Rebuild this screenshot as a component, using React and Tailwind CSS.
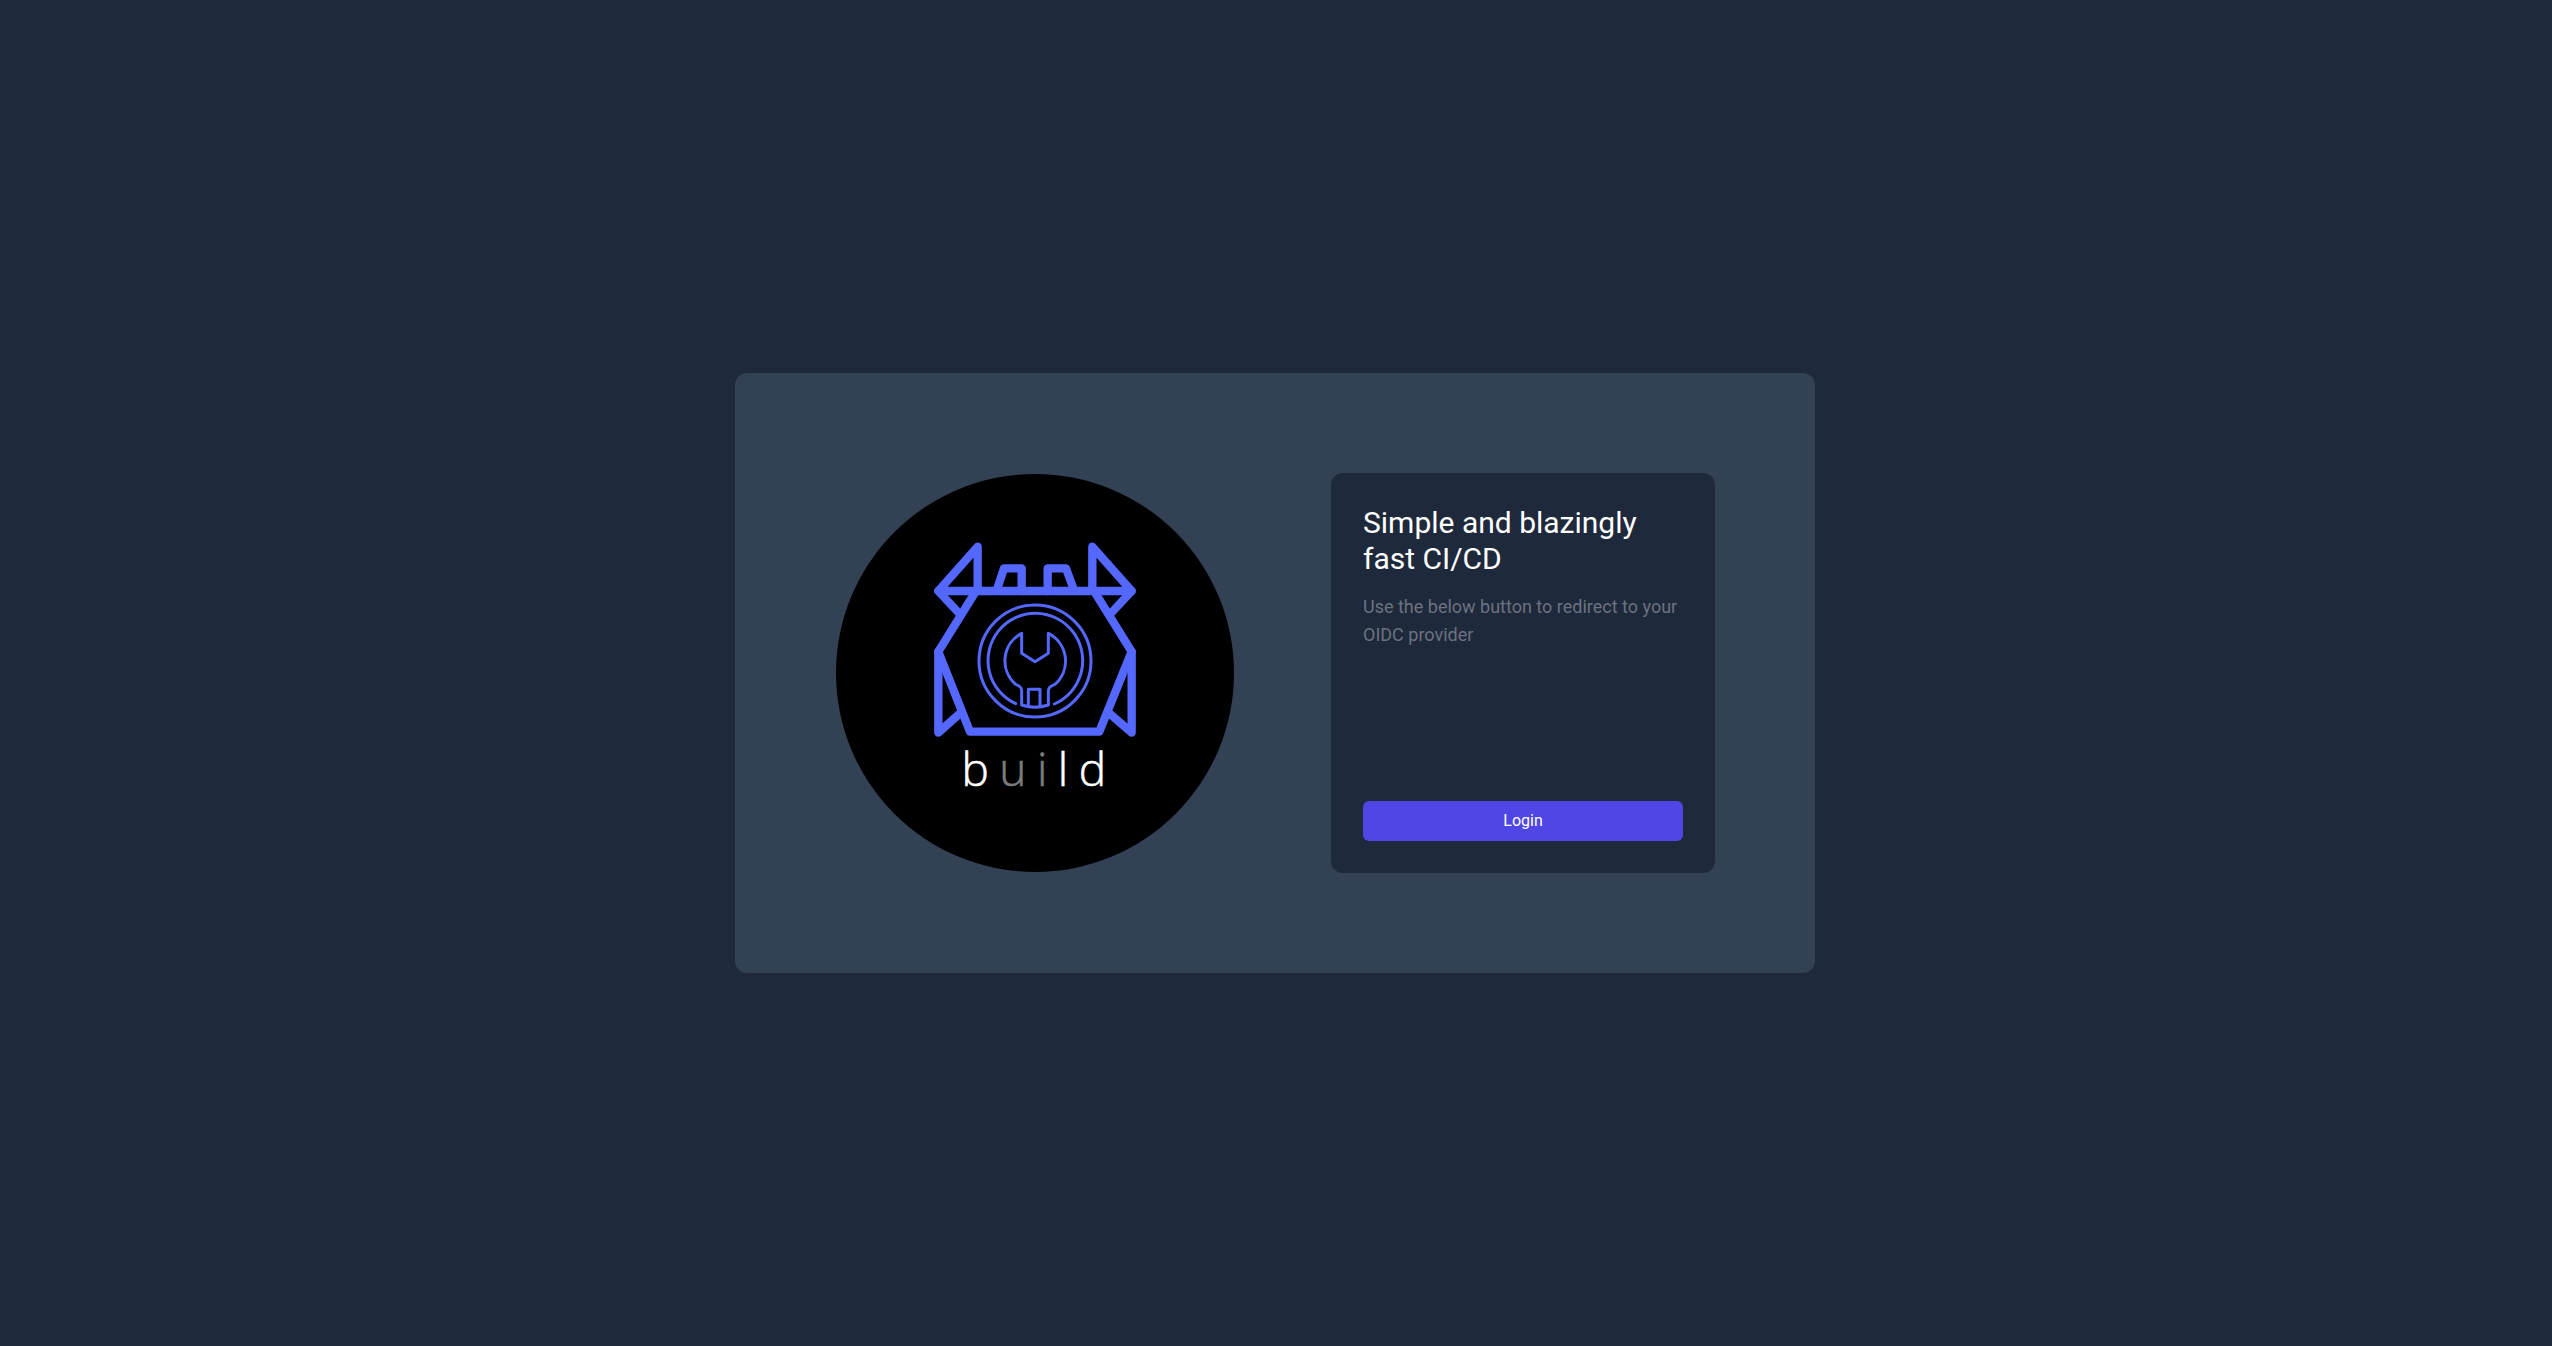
export default function App() {
  return (
    <div className="flex h-screen w-full items-center justify-center bg-[#1e293b] pr-[2px]" style={{ fontFamily: 'Roboto, sans-serif' }}>
      <div className="flex h-[600px] w-[1080px] items-center justify-between rounded-xl bg-[#334155] px-[100px]">
        <div className="relative ml-px h-[398px] w-[398px] rounded-full bg-black">
          <svg viewBox="48 42 1194 1194" className="h-full w-full" fill="none" stroke="#5468ff" strokeLinejoin="round" strokeLinecap="round">
            <g strokeWidth="25">
              <path d="M473 260 L355 393 H935 L817 260 V393 M473 260 V393" />
              <path d="M468 393 L355 575 L450 815 H838 L935 575 L822 393" />
              <path d="M355 393 L422 465 M935 393 L868 465" />
              <path d="M355 575 V818 L420 760 M935 575 V818 L868 760" />
              <path d="M532 385 L552 325 H605 V393 M683 393 V325 H738 L760 385" />
            </g>
            <g strokeWidth="9">
              <circle cx="645" cy="603" r="168" />
              <path d="M587 731 A142 142 0 1 1 703 732" />
              <path d="M605 520 V580 L645 605 L685 580 V520 A93 93 0 0 1 705 673 Q685 680 685 692 V735 Q645 748 605 735 V692 Q605 680 587 673 A93 93 0 0 1 605 520 Z" />
              <path d="M625 737 V688 H660 V737" />
            </g>
          </svg>
          <div className="absolute left-0 right-0 top-[259px] flex justify-center pl-[8px] text-[46px] font-light leading-[70px] tracking-[10.5px] text-white [-webkit-text-stroke:0.6px]" style={{ fontFamily: '"Open Sans", sans-serif' }}>
            <span>b</span>
            <span className="text-[#7d7d7d]">u</span>
            <span className="text-[#7d7d7d]">i</span>
            <span>l</span>
            <span>d</span>
          </div>
        </div>
        <div className="flex h-[400px] w-[384px] flex-col justify-between rounded-xl bg-[#1e293b] p-8">
          <div>
            <h2 className="text-3xl leading-9 font-normal text-white">Simple and blazingly fast CI/CD</h2>
            <p className="mt-4 text-lg leading-7 text-[#6b7280]">Use the below button to redirect to your OIDC provider</p>
          </div>
          <button className="h-10 w-full rounded-md bg-[#4f46e5] text-base font-normal text-white">Login</button>
        </div>
      </div>
    </div>
  );
}
